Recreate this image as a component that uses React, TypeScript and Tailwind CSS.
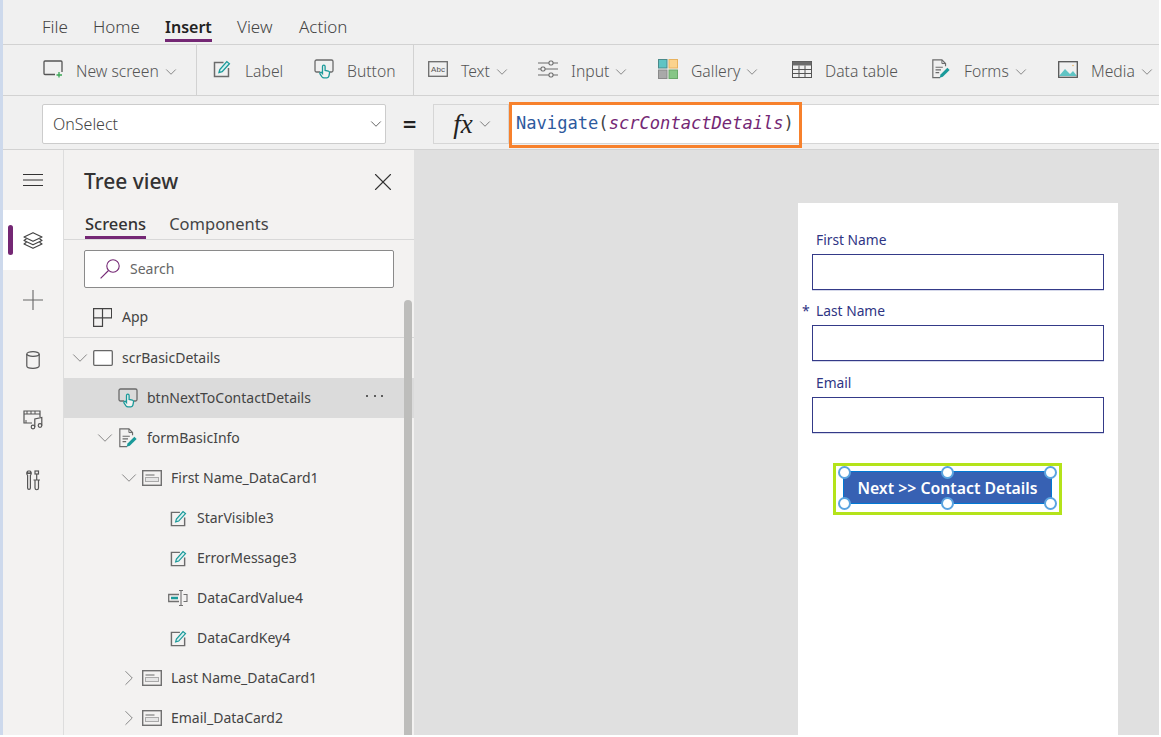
import { ChevronDown, ChevronRight, X } from "lucide-react";
import type { ReactNode } from "react";

const TEAL = "#1a9a9a";
const GREY = "#6b6b6b";

function LabelIcon({ size = 18 }: { size?: number }) {
  return (
    <svg width={size} height={size} viewBox="0 0 18 18" fill="none">
      <path d="M10.5 2.500H1.500v14h14V8" stroke={GREY} strokeWidth="1.500" />
      <path d="M6 12.500l.8-3L13.800 1.600l2.600 2.200-7.200 7.900z" stroke={TEAL} strokeWidth="1.300" fill="#d8f0f0" />
    </svg>
  );
}

function ButtonIcon({ size = 20 }: { size?: number }) {
  return (
    <svg width={size} height={size} viewBox="0 0 20 20" fill="none">
      <path d="M6 13H2.500a1.500 1.500 0 0 1-1.500-1.500v-9A1.500 1.500 0 0 1 2.500 1h15A1.500 1.500 0 0 1 19 2.500v9a1.500 1.500 0 0 1-1.500 1.500H16" stroke={GREY} strokeWidth="1.300" />
      <path d="M8.500 14.500V7.500a1.300 1.300 0 0 1 2.600 0v4l3.300.7c.9.2 1.300 1 1.100 1.900l-.6 3.100a2 2 0 0 1-2 1.600H10a2.500 2.500 0 0 1-2-1l-2-2.800c-.7-1.200.9-2.300 1.800-1.300z" stroke={TEAL} strokeWidth="1.300" fill="#f3f2f1" />
    </svg>
  );
}

function TextIcon() {
  return (
    <svg width="20" height="16" viewBox="0 0 20 16" fill="none">
      <rect x="0.700" y="0.700" width="18.600" height="14.600" stroke={GREY} strokeWidth="1.300" />
      <text x="10" y="11" textAnchor="middle" fontSize="8" fontFamily="'Liberation Sans', sans-serif" fill="#555">Abc</text>
    </svg>
  );
}

function InputIcon() {
  return (
    <svg width="20" height="20" viewBox="0 0 20 20" fill="none" stroke={GREY} strokeWidth="1.100">
      <path d="M0 4h11M15 4h5M0 10h3M7 10h13M0 16h11M15 16h5" />
      <rect x="11" y="2" width="4" height="4" rx="1.500" />
      <rect x="3" y="8" width="4" height="4" rx="1.500" />
      <rect x="11" y="14" width="4" height="4" rx="1.500" />
    </svg>
  );
}

function GalleryIcon() {
  return (
    <svg width="20" height="20" viewBox="0 0 20 20">
      <rect x="0.500" y="0.500" width="8.500" height="8.500" fill="#5fc4c4" stroke="#4a8a8a" />
      <rect x="11" y="0.500" width="8.500" height="8.500" fill="#fbd38d" stroke="#e8b25e" />
      <rect x="0.500" y="11" width="8.500" height="8.500" fill="#a9a9a9" stroke="#8a8a8a" />
      <rect x="11" y="11" width="8.500" height="8.500" fill="#86c686" stroke="#6aa86a" />
    </svg>
  );
}

function DataTableIcon() {
  return (
    <svg width="20" height="17" viewBox="0 0 20 17" fill="none">
      <rect x="0.500" y="0.500" width="19" height="16" stroke="#555" />
      <rect x="0.500" y="0.500" width="19" height="4" fill="#6b6b6b" />
      <path d="M0 8.500h20M0 12.500h20M7 4.500v12M13 4.500v12" stroke="#555" />
    </svg>
  );
}

function FormsIcon({ size = 20 }: { size?: number }) {
  return (
    <svg width={size} height={size} viewBox="0 0 20 22" fill="none">
      <path d="M9 20.500H1V1h10l4 4v3" stroke={GREY} strokeWidth="1.300" />
      <path d="M11 1v4h4" stroke={GREY} strokeWidth="1.100" />
      <path d="M4 9h8M4 12h6M4 15h4" stroke={GREY} strokeWidth="1.200" />
      <path d="M8.500 20.500l1-3.500 7.500-7.500 2.500 2.500-7.500 7.500z" fill={TEAL} />
    </svg>
  );
}

function MediaIcon() {
  return (
    <svg width="20" height="17" viewBox="0 0 20 17" fill="none">
      <path d="M1 15l6-7 5 5 3-3 4 5z" fill="#5fc4c4" />
      <rect x="0.700" y="0.700" width="18.600" height="15.600" stroke="#555" strokeWidth="1.300" />
      <circle cx="15" cy="4.500" r="0.800" fill="#e8b25e" />
    </svg>
  );
}

function ScreenPlusIcon() {
  return (
    <svg width="20" height="18" viewBox="0 0 20 18" fill="none">
      <path d="M12 14.500H2a1 1 0 0 1-1-1V2a1 1 0 0 1 1-1h16a1 1 0 0 1 1 1v10" stroke="#555" strokeWidth="1.300" />
      <path d="M16 12v5.500M13.500 15h5.500" stroke="#3aa655" strokeWidth="1.300" />
    </svg>
  );
}

function CardIcon() {
  return (
    <svg width="20" height="16" viewBox="0 0 20 16" fill="none">
      <rect x="0.700" y="0.700" width="18.600" height="14.600" stroke="#707070" strokeWidth="1.400" />
      <path d="M3.500 5h9" stroke="#888" strokeWidth="1.300" />
      <rect x="3.500" y="7.500" width="13" height="4" stroke="#aaa" fill="#e5e5e5" />
    </svg>
  );
}

function InputCardIcon() {
  return (
    <svg width="20" height="18" viewBox="0 0 20 18" fill="none">
      <path d="M11 5.500H0.700v7H11" stroke="#707070" strokeWidth="1.300" />
      <path d="M3 9h7" stroke={TEAL} strokeWidth="2.500" />
      <path d="M11 1.500h4M11 16.500h4M13 1.500v15M15.500 5.500h3.500v7h-3.500" stroke="#707070" strokeWidth="1.100" />
    </svg>
  );
}

function AppIcon() {
  return (
    <svg width="19" height="19" viewBox="0 0 19 19" fill="none" stroke="#444" strokeWidth="1.200">
      <path d="M.6.600h18v9.200H9.500v8.600H.6zM9.500.600v9.200M.6 9.800h8.900" />
    </svg>
  );
}

function ScreenIcon() {
  return (
    <svg width="20" height="16" viewBox="0 0 20 16" fill="none">
      <rect x="0.700" y="0.700" width="18.600" height="14.600" rx="1" stroke="#666" strokeWidth="1.300" fill="#fff" />
    </svg>
  );
}

function HamburgerIcon() {
  return (
    <svg width="20" height="12" viewBox="0 0 20 12" fill="none" stroke="#333" strokeWidth="1">
      <path d="M0 .5h20M0 6h20M0 11.500h20" />
    </svg>
  );
}

function LayersIcon() {
  return (
    <svg width="20" height="17" viewBox="0 0 20 17" fill="none" stroke="#444" strokeWidth="1.200" strokeLinejoin="round">
      <path d="M10 .7l9 4.300-9 4.300-9-4.300z" />
      <path d="M3.500 6.700L1 8.500l9 4.300 9-4.300-2.500-1.800" />
      <path d="M3.500 10.200L1 12l9 4.300 9-4.300-2.500-1.800" />
    </svg>
  );
}

function PlusIcon() {
  return (
    <svg width="20" height="20" viewBox="0 0 20 20" fill="none" stroke="#666" strokeWidth="1.100">
      <path d="M10 0v20M0 10h20" />
    </svg>
  );
}

function CylinderIcon() {
  return (
    <svg width="14" height="18" viewBox="0 0 14 18" fill="none" stroke="#555" strokeWidth="1.200">
      <ellipse cx="7" cy="3" rx="6.200" ry="2.300" />
      <path d="M.8 3v12c0 1.300 2.800 2.300 6.200 2.300s6.200-1 6.200-2.300V3" />
    </svg>
  );
}

function MediaRailIcon() {
  return (
    <svg width="20" height="20" viewBox="0 0 20 20" fill="none" stroke="#555" strokeWidth="1.200">
      <path d="M9 13H1V1h16v6" />
      <path d="M1 4h16M4 1v3M8 1v3M12 1v3M3 13v-3" strokeWidth="1" />
      <circle cx="10" cy="17" r="1.800" />
      <circle cx="17" cy="15.500" r="1.800" />
      <path d="M11.800 17V9l7 -1.500V15.500" />
    </svg>
  );
}

function ToolsIcon() {
  return (
    <svg width="14" height="21" viewBox="0 0 14 21" fill="none" stroke="#555" strokeWidth="1.200">
      <path d="M2 1v2.500h2V1c1.500.6 1.700 3 .4 4.300V18a1.400 1.400 0 0 1-2.800 0V5.300C.3 4 .5 1.600 2 1z" />
      <rect x="9" y="1" width="3.500" height="3" />
      <path d="M10.700 4v6M9 10h3.500v8a1.700 1.700 0 0 1-3.500 0zM7.500 10h7" />
    </svg>
  );
}

function SearchIcon() {
  return (
    <svg width="20" height="20" viewBox="0 0 20 20" fill="none" stroke="#742774" strokeWidth="1.100">
      <circle cx="13" cy="7" r="6.200" />
      <path d="M8.500 11.500L.6 19.400" />
    </svg>
  );
}

function ToolItem({ icon, label, chevron, className }: { icon: ReactNode; label: string; chevron?: boolean; className: string }) {
  return (
    <div className={`flex items-center shrink-0 pt-[4px] ${className}`}>
      <span className="w-[20px] flex items-center justify-center -mt-[5px]">{icon}</span>
      <span className="ml-[13px] text-[15.700px] font-light text-[#555555] whitespace-nowrap">{label}</span>
      {chevron && <ChevronDown className="ml-[3px] text-[#666666]" size={18} strokeWidth={1} />}
    </div>
  );
}

type Row = { label: string; indent: number; chevron?: "down" | "right"; icon: ReactNode; hover?: boolean };

const rows: Row[] = [
  { label: "scrBasicDetails", indent: 8, chevron: "down", icon: <ScreenIcon /> },
  { label: "btnNextToContactDetails", indent: 33, icon: <ButtonIcon />, hover: true },
  { label: "formBasicInfo", indent: 33, chevron: "down", icon: <FormsIcon /> },
  { label: "First Name_DataCard1", indent: 57, chevron: "down", icon: <CardIcon /> },
  { label: "StarVisible3", indent: 83, icon: <LabelIcon size={17} /> },
  { label: "ErrorMessage3", indent: 83, icon: <LabelIcon size={17} /> },
  { label: "DataCardValue4", indent: 83, icon: <InputCardIcon /> },
  { label: "DataCardKey4", indent: 83, icon: <LabelIcon size={17} /> },
  { label: "Last Name_DataCard1", indent: 57, chevron: "right", icon: <CardIcon /> },
  { label: "Email_DataCard2", indent: 57, chevron: "right", icon: <CardIcon /> },
];

function TreeRow({ row }: { row: Row }) {
  return (
    <div className={`h-[40px] flex items-center shrink-0 relative ${row.hover ? "bg-[#dbdbdb]" : ""}`} style={{ paddingLeft: row.indent }}>
      <span className="w-[16px] mr-[5px] flex items-center justify-center text-[#777777] shrink-0">
        {row.chevron === "down" && <ChevronDown size={26} strokeWidth={0.8} className="shrink-0" />}
        {row.chevron === "right" && <ChevronRight size={26} strokeWidth={0.8} className="shrink-0" />}
      </span>
      <span className="w-[20px] flex items-center justify-center shrink-0">{row.icon}</span>
      <span className="ml-[9px] mb-[2px] text-[14px] text-[#444444] whitespace-nowrap">{row.label}</span>
      {row.hover && (
        <span className="absolute left-[302px] top-[17px] flex gap-[5.500px]">
          <span className="w-[2px] h-[2px] bg-[#333333] rounded-full" />
          <span className="w-[2px] h-[2px] bg-[#333333] rounded-full" />
          <span className="w-[2px] h-[2px] bg-[#333333] rounded-full" />
        </span>
      )}
    </div>
  );
}

function FormField({ label, star, className = "" }: { label: string; star?: boolean; className?: string }) {
  return (
    <div className={`relative ${className}`}>
      {star && <span className="absolute left-[-10px] top-[1px] text-[14px] text-[#2f3584]">*</span>}
      <div className="pl-[4px] pb-[2px] h-[26px] flex items-center text-[13.800px] text-[#2f3584]">{label}</div>
      <div className="h-[36px] border border-[#343a88] bg-white shadow-[0_1px_0_#d5d8ea]" />
    </div>
  );
}

function Handle({ className }: { className: string }) {
  return <span className={`absolute w-[13px] h-[13px] rounded-full bg-white border-2 border-[#5ba4e0] ${className}`} />;
}

export default function App() {
  return (
    <div className="w-[1161px] h-[737px] overflow-hidden bg-white font-['Noto_Sans',sans-serif]">
      <div className="w-[1159px] h-[735px] overflow-hidden flex bg-[#f0f0f0]">
        <div className="w-[3px] bg-[#cdd9ec] shrink-0" />
        <div className="flex-1 flex flex-col min-w-0">
          {/* menu */}
          <div className="h-[45px] shrink-0 border-b border-[#d2d2d2] flex items-center pl-[39px] pt-[9px] text-[17px] font-light text-[#444444]">
            <span className="w-[51px]">File</span>
            <span className="w-[72px]">Home</span>
            <span className="relative w-[72px]">
              <span className="font-semibold text-[16px] text-[#222222]">Insert</span>
              <span className="absolute left-0 w-[47px] top-[25px] h-[3px] bg-[#742774]" />
            </span>
            <span className="w-[62px]">View</span>
            <span>Action</span>
          </div>

          {/* ribbon */}
          <div className="h-[51px] shrink-0 border-b border-[#d2d2d2] flex items-stretch overflow-hidden">
            <div className="w-[194px] shrink-0 border-r border-[#d2d2d2] flex items-center pl-[40px]">
              <ToolItem icon={<ScreenPlusIcon />} label="New screen" chevron className="" />
            </div>
            <div className="w-[217px] shrink-0 border-r border-[#d2d2d2] flex items-center pl-[15px]">
              <ToolItem icon={<LabelIcon />} label="Label" className="w-[102px]" />
              <ToolItem icon={<ButtonIcon />} label="Button" className="" />
            </div>
            <div className="flex items-center pl-[14px]">
              <ToolItem icon={<TextIcon />} label="Text" chevron className="w-[110px]" />
              <ToolItem icon={<InputIcon />} label="Input" chevron className="w-[120px]" />
              <ToolItem icon={<GalleryIcon />} label="Gallery" chevron className="w-[134px]" />
              <ToolItem icon={<DataTableIcon />} label="Data table" className="w-[139px]" />
              <ToolItem icon={<FormsIcon />} label="Forms" chevron className="w-[127px]" />
              <ToolItem icon={<MediaIcon />} label="Media" chevron className="" />
            </div>
          </div>

          {/* formula bar */}
          <div className="h-[54px] shrink-0 border-b border-[#d2d2d2] flex items-center pt-[3px] pl-[39px]">
            <div className="w-[344px] h-[40px] bg-white border border-[#cccccc] rounded-[2px] flex items-center justify-between pl-[10px] text-[16px] font-light text-[#444444]">
              <span>OnSelect</span>
              <ChevronDown size={18} strokeWidth={1} className="text-[#333333]" />
            </div>
            <span className="w-[47px] text-center text-[24px] font-semibold text-[#222222]">=</span>
            <div className="w-[76px] h-[40px] border border-[#d6d6d6] flex items-center justify-center gap-[3px] pl-[5px] font-['Liberation_Serif',serif] italic text-[27px] text-[#222222]">
              <span>fx</span>
              <ChevronDown size={18} strokeWidth={1} className="text-[#555555]" />
            </div>
            <div className="flex-1 h-[40px] bg-white border-y border-[#d6d6d6] relative">
              <div className="absolute left-0 top-[-3px] w-[293px] h-[46px] border-[3px] border-[#f7812c] flex items-center pl-[4px] pb-[3px] font-['DejaVu_Sans_Mono',monospace] text-[17.100px] whitespace-nowrap">
                <span className="text-[#2d5a9e]">Navigate</span>
                <span className="text-[#444444]">(</span>
                <span className="italic text-[#742774]">scrContactDetails</span>
                <span className="text-[#444444]">)</span>
              </div>
            </div>
          </div>

          {/* body */}
          <div className="flex-1 flex min-h-0">
            {/* rail */}
            <div className="w-[61px] shrink-0 bg-[#f3f2f1] border-r border-[#dddddd] flex flex-col items-center">
              <div className="h-[60px] w-full flex items-center justify-center">
                <HamburgerIcon />
              </div>
              <div className="h-[60px] w-full bg-white relative flex items-center justify-center">
                <span className="absolute left-[5px] top-[15px] w-[5px] h-[30px] rounded-[3px] bg-[#742774]" />
                <LayersIcon />
              </div>
              <div className="h-[60px] w-full flex items-center justify-center">
                <PlusIcon />
              </div>
              <div className="h-[60px] w-full flex items-center justify-center">
                <CylinderIcon />
              </div>
              <div className="h-[60px] w-full flex items-center justify-center">
                <MediaRailIcon />
              </div>
              <div className="h-[60px] w-full flex items-center justify-center">
                <ToolsIcon />
              </div>
            </div>

            {/* tree view */}
            <div className="w-[350px] shrink-0 bg-[#f3f2f1] flex flex-col relative overflow-hidden">
              <div className="h-[58px] shrink-0 flex items-center justify-between pt-[5px] pl-[20px] pr-[16px]">
                <span className="text-[21px] font-medium text-[#333333]">Tree view</span>
                <X size={30} strokeWidth={0.9} className="text-[#333333]" />
              </div>
              <div className="h-[32px] shrink-0 border-b border-[#d8d8d8] flex pt-[4px] pl-[21px] gap-[23px] text-[16.500px] text-[#444444]">
                <span className="relative font-medium text-[#333333]">
                  Screens
                  <span className="absolute left-0 right-0 top-[24px] h-[3px] bg-[#742774]" />
                </span>
                <span>Components</span>
              </div>
              <div className="pl-[20px] pt-[10px] h-[58px] shrink-0">
                <div className="w-[310px] h-[38px] bg-white border border-[#8a8a8a] rounded-[2px] flex items-center pl-[15px] gap-[10px] text-[14px] text-[#666666]">
                  <SearchIcon />
                  <span className="mb-[2px]">Search</span>
                </div>
              </div>
              <div className="h-[40px] shrink-0 border-b border-[#d8d8d8] flex items-center pl-[29px] gap-[10px] text-[14px] text-[#444444]">
                <AppIcon />
                <span className="mb-[2px]">App</span>
              </div>
              {rows.map((row) => (
                <TreeRow key={row.label} row={row} />
              ))}
              <div className="absolute left-[340px] top-[150px] bottom-0 w-[8px] bg-[#bdbdbb] rounded-t-[4px]" />
            </div>

            {/* canvas */}
            <div className="flex-1 bg-[#e0e0e0] pl-[384px] pt-[53px] min-w-0">
              <div className="w-[320px] h-[600px] bg-white pt-[25px] px-[14px]">
                <div className="flex flex-col gap-[9px] w-[292px]">
                  <FormField label="First Name" />
                  <FormField label="Last Name" star />
                  <FormField label="Email" className="mt-[1px]" />
                </div>
                <div className="relative ml-[21px] mt-[30px] w-[229px] h-[52px] border-[3px] border-[#b4e31a] pt-[5px] pl-[7px]">
                  <div className="w-[209px] h-[33px] pt-[2px] bg-[#3761b3] border border-[#0078d4] flex items-center justify-center text-white text-[15.800px] font-semibold whitespace-nowrap">
                    Next &gt;&gt; Contact Details
                  </div>
                  <Handle className="left-[2px] top-0" />
                  <Handle className="left-[105px] top-0" />
                  <Handle className="left-[208px] top-0" />
                  <Handle className="left-[2px] top-[31px]" />
                  <Handle className="left-[105px] top-[31px]" />
                  <Handle className="left-[208px] top-[31px]" />
                </div>
              </div>
            </div>
          </div>
        </div>
      </div>
    </div>
  );
}
